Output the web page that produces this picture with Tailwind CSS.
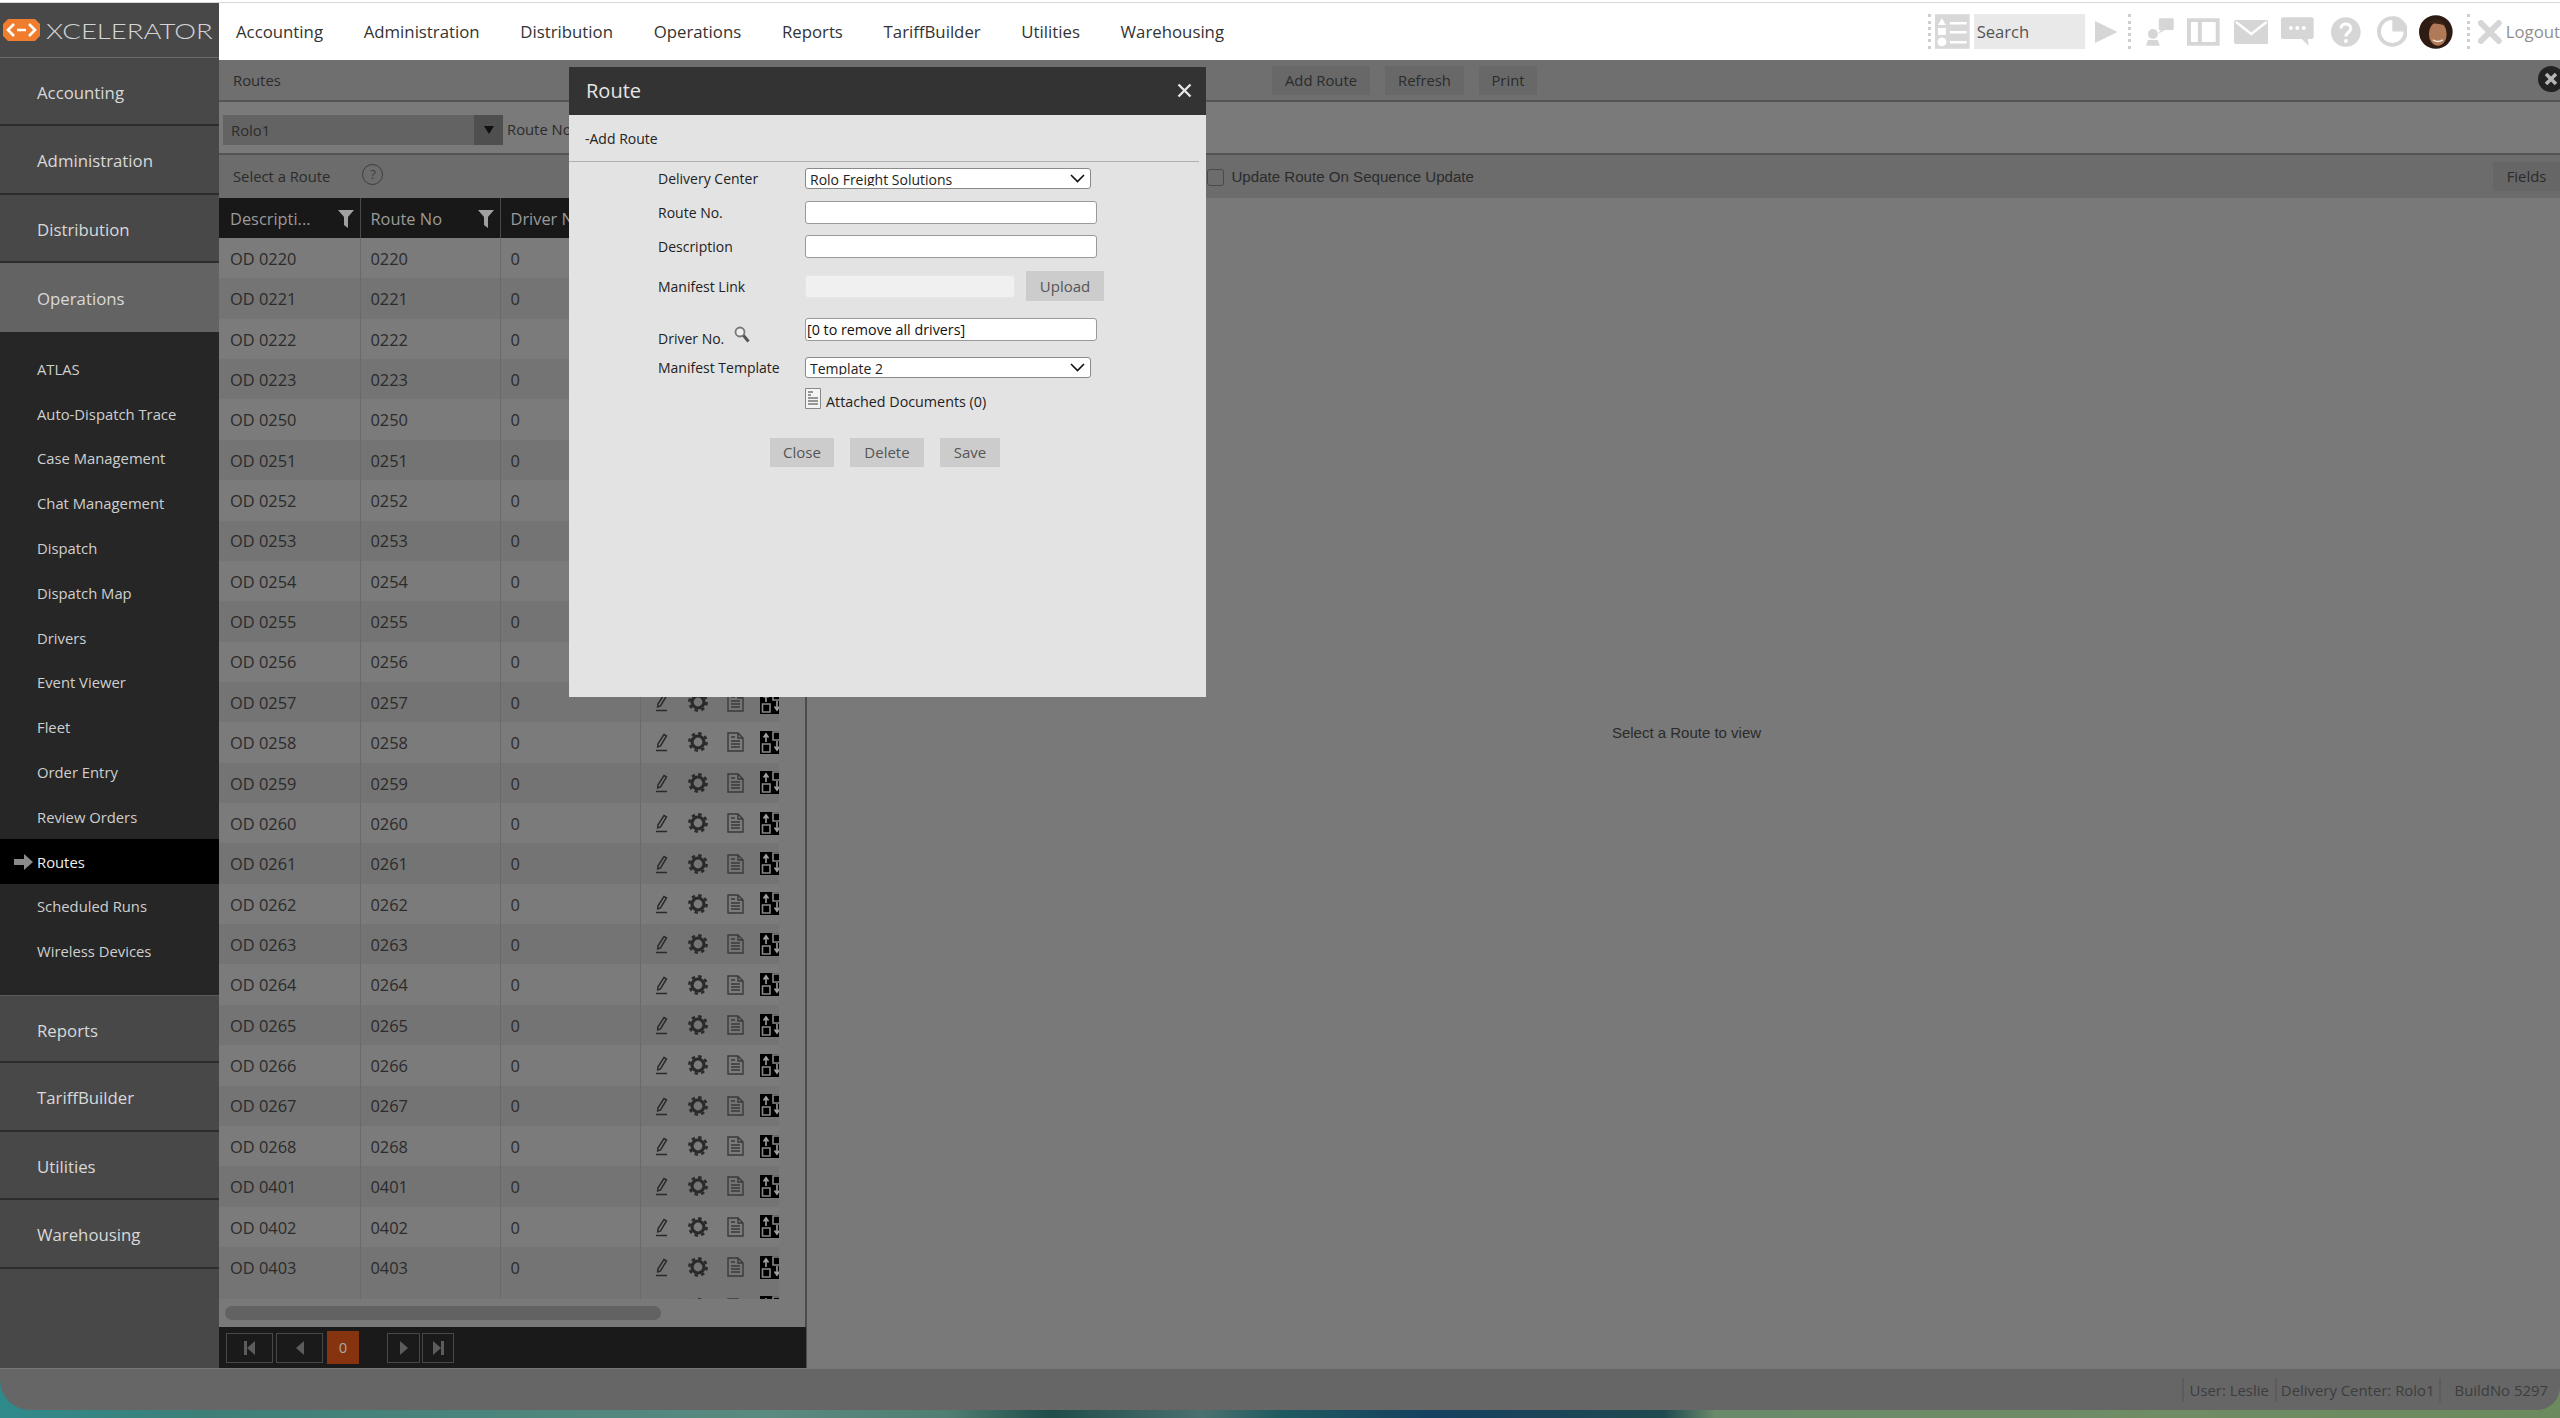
<!DOCTYPE html>
<html>
<head>
    <title>Routes</title>
    <script src="https://cdn.jsdelivr.net/npm/@tailwindcss/browser@4"></script>
</head>

<body class="w-[2560px] h-[1418px] overflow-hidden font-['Open_Sans',sans-serif] text-[14.8px] text-[#2b2b2b] bg-[linear-gradient(90deg,#2f8a8c,#3d7f78_8%,#5a8a80_30%,#4f7f72_37%,#1f4d4a_41%,#4a7070_47%,#1f5a60_50%,#154060_56%,#1f4a50_65%,#6a8a6a_67%,#6f8c64_85%,#6b8a5e)]">
    <svg class="hidden">
        <symbol id="i-pencil" viewBox="0 0 14 20"><path d="M9 2.500l2.500 1.500-6 10-2.800 1 .2-3zM1 18.500h11" fill="none" stroke="#2a2a2a" stroke-width="1.500"/></symbol>
        <symbol id="i-gear" viewBox="0 0 22 22"><circle cx="11" cy="11" r="6" fill="none" stroke="#2a2a2a" stroke-width="3.200"/><circle cx="11" cy="11" r="8.600" fill="none" stroke="#2a2a2a" stroke-width="2.600" stroke-dasharray="3.400 3.350"/></symbol>
        <symbol id="i-doc" viewBox="0 0 17 20"><path d="M1 1h10l5 5v13H1zM11 1v5h5M4 5h4M4 9h9M4 12h9M4 15h9" fill="none" stroke="#3a3a3a" stroke-width="1.400"/></symbol>
        <symbol id="i-flow" viewBox="0 0 19 23"><rect width="19" height="23" fill="#000"/><path d="M2.500 13h7.500v8H2.500zM13 1h9v8h-9z" fill="none" stroke="#8a8a8a" stroke-width="1.600"/><path d="M6 11V4M3.500 6.500L6 3l2.500 3.500M17 10v8M14.500 15.500L17 19l2.500-3.500" fill="none" stroke="#a0a0a0" stroke-width="1.600"/></symbol>
        <symbol id="i-filter" viewBox="0 0 16 18"><path d="M0 0h16l-6 7v11l-4-3V7z" fill="#a0a0a0"/></symbol>
    </svg>

    <div class="h-[3px] bg-white border-b border-[#d8d8d8]"></div>

    <div class="flex h-[1365px]">
        <!-- sidebar -->
        <aside class="w-[219px] shrink-0 bg-[#484848] text-[#d9d9d9] text-[16.8px]">
            <div class="flex items-center h-[55px] border-b border-[#6a6a6a] pl-[3px]">
                <svg class="shrink-0" width="37" height="22" viewBox="0 0 37 22"><path d="M5 0h27l5 5v12l-5 5H5l-5-5V5z" fill="#ef7d2d"/><path d="M11 5l-6 6 6 6M26 5l6 6-6 6M14 11h9" fill="none" stroke="#fff" stroke-width="2.600"/></svg>
                <span class="ml-[6px] origin-left scale-x-[1.31] font-['Lato',sans-serif] font-light text-[21px] leading-none text-[#d4d4d4]">XCELERATOR</span>
            </div>
            <div class="flex items-center h-[68.4px] pl-[37px] pt-[3px] border-b-2 border-[#2c2c2c]">Accounting</div>
            <div class="flex items-center h-[68.4px] pl-[37px] pt-[3px] border-b-2 border-[#2c2c2c]">Administration</div>
            <div class="flex items-center h-[68.4px] pl-[37px] pt-[3px] border-b-2 border-[#2c2c2c]">Distribution</div>
            <div class="flex items-center h-[68.4px] pl-[37px] pt-[2px] bg-[#636363]">Operations</div>
            <nav class="h-[663.4px] pt-[15px] bg-[#262626] text-[14.8px] text-[#cfcfcf]">
                <div class="flex items-center h-[44.8px] pl-[37px]">ATLAS</div>
                <div class="flex items-center h-[44.8px] pl-[37px]">Auto-Dispatch Trace</div>
                <div class="flex items-center h-[44.8px] pl-[37px]">Case Management</div>
                <div class="flex items-center h-[44.8px] pl-[37px]">Chat Management</div>
                <div class="flex items-center h-[44.8px] pl-[37px]">Dispatch</div>
                <div class="flex items-center h-[44.8px] pl-[37px]">Dispatch Map</div>
                <div class="flex items-center h-[44.8px] pl-[37px]">Drivers</div>
                <div class="flex items-center h-[44.8px] pl-[37px]">Event Viewer</div>
                <div class="flex items-center h-[44.8px] pl-[37px]">Fleet</div>
                <div class="flex items-center h-[44.8px] pl-[37px]">Order Entry</div>
                <div class="flex items-center h-[44.8px] pl-[37px]">Review Orders</div>
                <div class="flex items-center h-[44.8px] pl-[14px] bg-black text-[#eeeeee]">
                    <svg class="mr-[4px]" width="19" height="16" viewBox="0 0 19 16"><path d="M0 5h10V0l9 8-9 8v-5H0z" fill="#8a8a8a"/></svg>Routes
                </div>
                <div class="flex items-center h-[44.8px] pl-[37px]">Scheduled Runs</div>
                <div class="flex items-center h-[44.8px] pl-[37px]">Wireless Devices</div>
            </nav>
            <div class="flex items-center h-[68.4px] pl-[37px] pt-[3px] border-t border-b-2 border-t-[#5a5a5a] border-b-[#2c2c2c]">Reports</div>
            <div class="flex items-center h-[68.4px] pl-[37px] pt-[3px] border-b-2 border-[#2c2c2c]">TariffBuilder</div>
            <div class="flex items-center h-[68.4px] pl-[37px] pt-[3px] border-b-2 border-[#2c2c2c]">Utilities</div>
            <div class="flex items-center h-[68.4px] pl-[37px] pt-[3px] border-b-2 border-[#2c2c2c]">Warehousing</div>
        </aside>

        <div class="flex-1 min-w-0 flex flex-col">
            <!-- top menu -->
            <header class="flex items-center h-[57px] bg-white text-[16.8px] text-[#333333] overflow-hidden">
                <nav class="flex gap-[40.7px] pl-[17px]">
                    <span>Accounting</span>
                    <span>Administration</span>
                    <span>Distribution</span>
                    <span>Operations</span>
                    <span>Reports</span>
                    <span>TariffBuilder</span>
                    <span>Utilities</span>
                    <span>Warehousing</span>
                </nav>
                <div class="ml-auto flex items-center h-full shrink-0 w-[638px]">
                    <div class="w-0 h-[35px] border-l-[3px] border-dotted border-[#cfcfcf] ml-[6px]"></div>
                    <svg class="ml-[4px]" width="35" height="35" viewBox="0 0 35 35"><rect width="35" height="35" fill="#d8d8d8"/><path d="M7 4l4 7H3z" fill="#fff"/><rect x="3" y="14" width="8" height="7" fill="#fff"/><circle cx="7" cy="28" r="4.500" fill="#fff"/><path d="M15 8h17v2.500H15zM15 17h17v2.500H15zM15 27h17v2.500H15z" fill="#fff"/></svg>
                    <div class="flex items-center w-[112px] h-[35px] ml-[4px] pl-[3px] pt-[2px] bg-[#e9e9e9] text-[#555555] text-[16.6px]">Search</div>
                    <svg class="ml-[10px]" width="23" height="22" viewBox="0 0 23 22"><path d="M0 0l23 11L0 22z" fill="#d6d6d6"/></svg>
                    <div class="w-0 h-[35px] border-l-[3px] border-dotted border-[#cfcfcf] ml-[11px]"></div>
                    <svg class="ml-[15px]" width="28" height="28" viewBox="0 0 28 28"><rect x="13" width="15" height="12" rx="1" fill="#d6d6d6"/><path d="M16 11l-4 5 7-4z" fill="#d6d6d6"/><circle cx="7" cy="16" r="5" fill="#d6d6d6"/><path d="M0 28l2-6h10l2 6z" fill="#d6d6d6"/></svg>
                    <svg class="ml-[13px]" width="33" height="28" viewBox="0 0 33 28"><path d="M2 2h29v24H2zM13 2v24" fill="none" stroke="#d6d6d6" stroke-width="4"/></svg>
                    <svg class="ml-[14px]" width="35" height="24" viewBox="0 0 35 24"><rect width="35" height="24" rx="2" fill="#d6d6d6"/><path d="M2 2l15.500 12L33 2" fill="none" stroke="#fff" stroke-width="2.500"/></svg>
                    <svg class="ml-[13px]" width="33" height="29" viewBox="0 0 33 29"><path d="M2 0h29a2 2 0 0 1 2 2v18a2 2 0 0 1-2 2h-4l1 7-7-7H2a2 2 0 0 1-2-2V2a2 2 0 0 1 2-2z" fill="#d6d6d6"/><circle cx="10" cy="11" r="2" fill="#fff"/><circle cx="16.500" cy="11" r="2" fill="#fff"/><circle cx="23" cy="11" r="2" fill="#fff"/></svg>
                    <svg class="ml-[17px]" width="30" height="30" viewBox="0 0 30 30"><circle cx="15" cy="15" r="15" fill="#d6d6d6"/><path d="M10 11.500c0-6 10-6 10 0 0 4-5 4-5 8" fill="none" stroke="#fff" stroke-width="3"/><circle cx="15" cy="24" r="2" fill="#fff"/></svg>
                    <svg class="ml-[16px]" width="31" height="31" viewBox="0 0 31 31"><circle cx="15.500" cy="15.500" r="13.500" fill="none" stroke="#d6d6d6" stroke-width="4"/><path d="M15.500 15.500V0A15.500 15.500 0 0 1 31 15.500z" fill="#d6d6d6"/></svg>
                    <svg class="ml-[12px]" width="34" height="34" viewBox="0 0 34 34"><ellipse cx="17" cy="17" rx="17" ry="17" fill="#2e1c14"/><ellipse cx="19" cy="19" rx="9" ry="12" fill="#b07a58"/><path d="M9 8c6-6 14-5 18 3-6-3-12-2-18-3z" fill="#3a2418"/><path d="M14 25c3 2 7 2 10 0" stroke="#f3e8e0" stroke-width="1.500" fill="none"/></svg>
                    <div class="w-0 h-[35px] border-l-[3px] border-dotted border-[#cfcfcf] ml-[14px]"></div>
                    <svg class="ml-[8px]" width="24" height="24" viewBox="0 0 24 24"><path d="M3 3l18 18M21 3L3 21" stroke="#d6d6d6" stroke-width="6" stroke-linecap="round"/></svg>
                    <span class="ml-[4px] text-[#8f8f8f]">Logout</span>
                </div>
            </header>

            <!-- page head -->
            <div class="relative flex items-center h-[42px] bg-[#6f6f6f] border-b-2 border-[#545454] overflow-hidden">
                <span class="w-[1039px] ml-[14px]">Routes</span>
                <div class="flex gap-[15px]">
                    <span class="flex items-center justify-center w-[98px] h-[29px] bg-[#686868]">Add Route</span>
                    <span class="flex items-center justify-center w-[79px] h-[29px] bg-[#686868]">Refresh</span>
                    <span class="flex items-center justify-center w-[58px] h-[29px] bg-[#686868]">Print</span>
                </div>
                <svg class="absolute left-[2319px] top-[6px]" width="26" height="26" viewBox="0 0 26 26"><circle cx="13" cy="13" r="13" fill="#222222"/><path d="M8 8l10 10M18 8L8 18" stroke="#b5b5b5" stroke-width="3.500"/></svg>
            </div>
            <div class="flex items-start pt-[13px] h-[53px] bg-[#7a7a7a] border-b-2 border-[#545454]">
                <div class="flex items-center justify-between w-[280px] h-[30px] ml-[4px] pl-[8px] bg-[#636363]">
                    Rolo1
                    <span class="flex items-center justify-center w-[29px] h-full bg-[#4f4f4f]">
                        <svg width="10" height="8" viewBox="0 0 10 8"><path d="M0 0h10L5 8z" fill="#111111"/></svg>
                    </span>
                </div>
                <span class="ml-[4px] mt-[3px]">Route No</span>
            </div>
            <div class="flex items-center h-[43px] bg-[#6c6c6c]">
                <span class="ml-[14px]">Select a Route</span>
                <span class="flex items-center justify-center w-[21px] h-[21px] ml-[32px] -mt-[4px] rounded-full border border-[#3c3c3c] text-[13px] text-[#3c3c3c]">?</span>
                <span class="w-[17px] h-[17px] ml-[824px] mt-[2px] rounded-[3px] border border-[#4a4a4a]"></span>
                <span class="ml-[7px] mt-[2px] font-['Liberation_Sans',sans-serif] text-[15.1px]">Update Route On Sequence Update</span>
                <span class="flex items-center justify-center w-[67px] h-[29px] ml-auto bg-[#666666]">Fields</span>
            </div>

            <div class="flex flex-1 min-h-0 bg-[#797979]">
                <!-- routes table -->
                <div class="w-[588px] shrink-0 border-r-2 border-[#4c4c4c] flex flex-col">
                    <div class="h-[1101px] w-[560px] overflow-hidden text-[16.4px]">
                        <table class="table-fixed w-[580px] border-collapse">
                            <colgroup>
                                <col class="w-[141px]"><col class="w-[140px]"><col class="w-[140px]"><col class="w-[159px]">
                            </colgroup>
                            <thead>
                                <tr class="h-[40px] bg-[#181818] text-[#9a9a9a] text-left">
                                    <th class="font-normal pl-[11px] pt-[2px] border-r border-[#4a4a4a]"><div class="flex items-center justify-between pr-[6px]">Descripti...<svg width="16" height="18"><use href="#i-filter"/></svg></div></th>
                                    <th class="font-normal pl-[10px] pt-[2px] border-r border-[#4a4a4a]"><div class="flex items-center justify-between pr-[6px]">Route No<svg width="16" height="18"><use href="#i-filter"/></svg></div></th>
                                    <th class="font-normal pl-[10px] pt-[2px] border-r border-[#4a4a4a]">Driver No</th>
                                    <th></th>
                                </tr>
                            </thead>
                            <tbody id="route-rows"></tbody>
                        </table>
                    </div>
                    <div class="flex items-center flex-1 px-[6px]">
                        <div class="w-[436px] h-[14px] rounded-full bg-[#626262]"></div>
                    </div>
                    <!-- pager -->
                    <div class="flex items-center h-[41px] -mr-[1px] pl-[7px] bg-[#1a1a1a]">
                        <span class="flex items-center justify-center w-[47px] h-[30px] border border-[#484848]"><svg width="11" height="14" viewBox="0 0 11 14"><path d="M0 0h3v14H0zM11 0v14L3 7z" fill="#5c5c5c"/></svg></span>
                        <span class="flex items-center justify-center w-[47px] h-[30px] ml-[3px] border border-[#484848]"><svg width="8" height="14" viewBox="0 0 8 14"><path d="M8 0v14L0 7z" fill="#5c5c5c"/></svg></span>
                        <span class="flex items-center justify-center w-[32px] h-[33px] ml-[4px] bg-[#85340f] text-[#a8a8a8]">0</span>
                        <span class="flex items-center justify-center w-[33px] h-[30px] ml-[28px] border border-[#484848]"><svg width="8" height="14" viewBox="0 0 8 14"><path d="M0 0v14l8-7z" fill="#5c5c5c"/></svg></span>
                        <span class="flex items-center justify-center w-[32px] h-[30px] ml-[2px] border border-[#484848]"><svg width="11" height="14" viewBox="0 0 11 14"><path d="M8 0h3v14H8zM0 0v14l8-7z" fill="#5c5c5c"/></svg></span>
                    </div>
                </div>
                <div class="flex-1 flex justify-center pt-[524px] font-['Liberation_Sans',sans-serif] text-[15px]">
                    <span class="ml-[6px]">Select a Route to view</span>
                </div>
            </div>
        </div>
    </div>

    <!-- status bar -->
    <footer class="flex items-center justify-end h-[42px] rounded-bl-[30px] rounded-br-[23px] bg-[#666666] border-t border-[#777777] text-[14.9px] text-[#3d3d3d]">
        <span class="pl-[6px] pr-[6px] border-l-2 border-[#5c5c5c] leading-[24px]">User: Leslie</span>
        <span class="pl-[4px] pr-[4px] border-l-2 border-[#5c5c5c] leading-[24px]">Delivery Center: Rolo1</span>
        <span class="pl-[14px] pr-[12px] border-l-2 border-[#5c5c5c] leading-[24px]">BuildNo 5297</span>
    </footer>

    <!-- route dialog -->
    <div class="absolute left-[569px] top-[67px] w-[637px] h-[630px] bg-[#e3e3e3] text-[14px] text-[#222222]">
        <div class="flex items-center justify-between h-[48px] pl-[17px] pr-[14px] bg-[#333333] text-[20px] text-[#e6e6e6]">
            Route
            <svg class="-mt-[2px]" width="15" height="15" viewBox="0 0 15 15"><path d="M1.500 1.500l12 12M13.500 1.500l-12 12" stroke="#e6e6e6" stroke-width="2.400"/></svg>
        </div>
        <div class="flex items-center h-[47px] mr-[7px] pl-[16px] border-b border-[#b0b0b0]">-Add Route</div>

        <div class="flex items-center mt-[6px] h-[21px]">
            <label class="w-[236px] pl-[89px]">Delivery Center</label>
            <div class="relative">
                <select class="block appearance-none w-[286px] h-[21px] pl-[4px] pb-[2px] rounded-[3px] bg-white border border-[#8a8a8a]"><option>Rolo Freight Solutions</option></select>
                <svg class="absolute right-[6px] top-[6px]" width="15" height="9" viewBox="0 0 15 9"><path d="M1 1l6.500 6.500L14 1" fill="none" stroke="#111111" stroke-width="1.600"/></svg>
            </div>
        </div>
        <div class="flex items-center mt-[11.5px] h-[23px]">
            <label class="w-[236px] pl-[89px]">Route No.</label>
            <input type="text" class="w-[292px] h-[23px] rounded-[3px] bg-white border border-[#9a9a9a]">
        </div>
        <div class="flex items-center mt-[11px] h-[23.5px]">
            <label class="w-[236px] pl-[89px]">Description</label>
            <input type="text" class="w-[292px] h-[23.5px] rounded-[3px] bg-white border border-[#9a9a9a]">
        </div>
        <div class="flex items-center mt-[13px] h-[30px]">
            <label class="w-[236px] pl-[89px]">Manifest Link</label>
            <input type="text" disabled class="w-[210px] h-[23px] rounded-[3px] bg-[#f0f0f0] border border-[#e6e6e6]">
            <button class="w-[78px] h-[30px] ml-[11px] bg-[#cccccc] text-[#555555] text-[15px]">Upload</button>
        </div>
        <div class="flex items-start mt-[17px] h-[23px]">
            <label class="flex w-[236px] pl-[89px] pt-[10px]">Driver No.
                <svg class="ml-[10px] -mt-[2px]" width="16" height="17" viewBox="0 0 16 17"><circle cx="6" cy="6" r="4.500" fill="#eeeeee" stroke="#777777" stroke-width="1.800"/><path d="M9.500 9.500l5 6" stroke="#555555" stroke-width="3"/></svg>
            </label>
            <input type="text" value="[0 to remove all drivers]" class="w-[292px] h-[23px] pl-[1px] rounded-[3px] bg-white border border-[#9a9a9a] text-[14.3px] text-[#111111]">
        </div>
        <div class="flex items-center mt-[15.5px] h-[21px]">
            <label class="w-[236px] pl-[89px]">Manifest Template</label>
            <div class="relative">
                <select class="block appearance-none w-[286px] h-[21px] pl-[4px] pb-[2px] rounded-[3px] bg-white border border-[#8a8a8a]"><option>Template 2</option></select>
                <svg class="absolute right-[6px] top-[6px]" width="15" height="9" viewBox="0 0 15 9"><path d="M1 1l6.500 6.500L14 1" fill="none" stroke="#111111" stroke-width="1.600"/></svg>
            </div>
        </div>
        <div class="flex items-end mt-[10px] h-[21px] pl-[236px]">
            <svg width="16" height="21" viewBox="0 0 16 21"><path d="M.5.5h15v20H.5z" fill="#f4f4f4" stroke="#888888"/><path d="M3 4h5M3 7h3M3 10h10M3 13h10M3 16h10" stroke="#777777" stroke-width="1.300"/></svg>
            <span class="ml-[5px] -mb-[4px] text-[14.3px]">Attached Documents (0)</span>
        </div>
        <div class="flex mt-[29px] ml-[201px] gap-[16px] text-[#555555] text-[15px]">
            <button class="w-[64px] h-[29px] bg-[#cccccc]">Close</button>
            <button class="w-[74px] h-[29px] bg-[#cccccc]">Delete</button>
            <button class="w-[60px] h-[29px] bg-[#cccccc]">Save</button>
        </div>
    </div>

    <script>
        const routeNos = ['0220', '0221', '0222', '0223'];
        for (let n = 250; n <= 268; n++) routeNos.push('0' + n);
        routeNos.push('0401', '0402', '0403');

        const iconCell = `
            <td class="pl-[14px]">
                <div class="flex items-center w-[150px]">
                    <svg width="14" height="20"><use href="#i-pencil"/></svg>
                    <svg class="ml-[18px]" width="22" height="22"><use href="#i-gear"/></svg>
                    <svg class="ml-[18px]" width="17" height="20"><use href="#i-doc"/></svg>
                    <svg class="ml-[16px] shrink-0" width="19" height="23"><use href="#i-flow"/></svg>
                </div>
            </td>`;

        const rows = routeNos.map((no, i) => `
            <tr class="h-[40.36px] ${i % 2 ? 'bg-[#747474]' : 'bg-[#7b7b7b]'}">
                <td class="pl-[11px] pt-[2px] border-r border-[#6a6a6a]">OD ${no}</td>
                <td class="pl-[10px] pt-[2px] border-r border-[#6a6a6a]">${no}</td>
                <td class="pl-[10px] pt-[2px] border-r border-[#6a6a6a]">0</td>
                ${iconCell}
            </tr>`);

        // the next row is only just scrolled into view
        rows.push(`
            <tr class="h-[40.36px] bg-[#747474]">
                <td class="border-r border-[#6a6a6a]"></td>
                <td class="border-r border-[#6a6a6a]"></td>
                <td class="border-r border-[#6a6a6a]"></td>
                ${iconCell}
            </tr>`);
        document.getElementById('route-rows').innerHTML = rows.join('');
    </script>
</body>
</html>
